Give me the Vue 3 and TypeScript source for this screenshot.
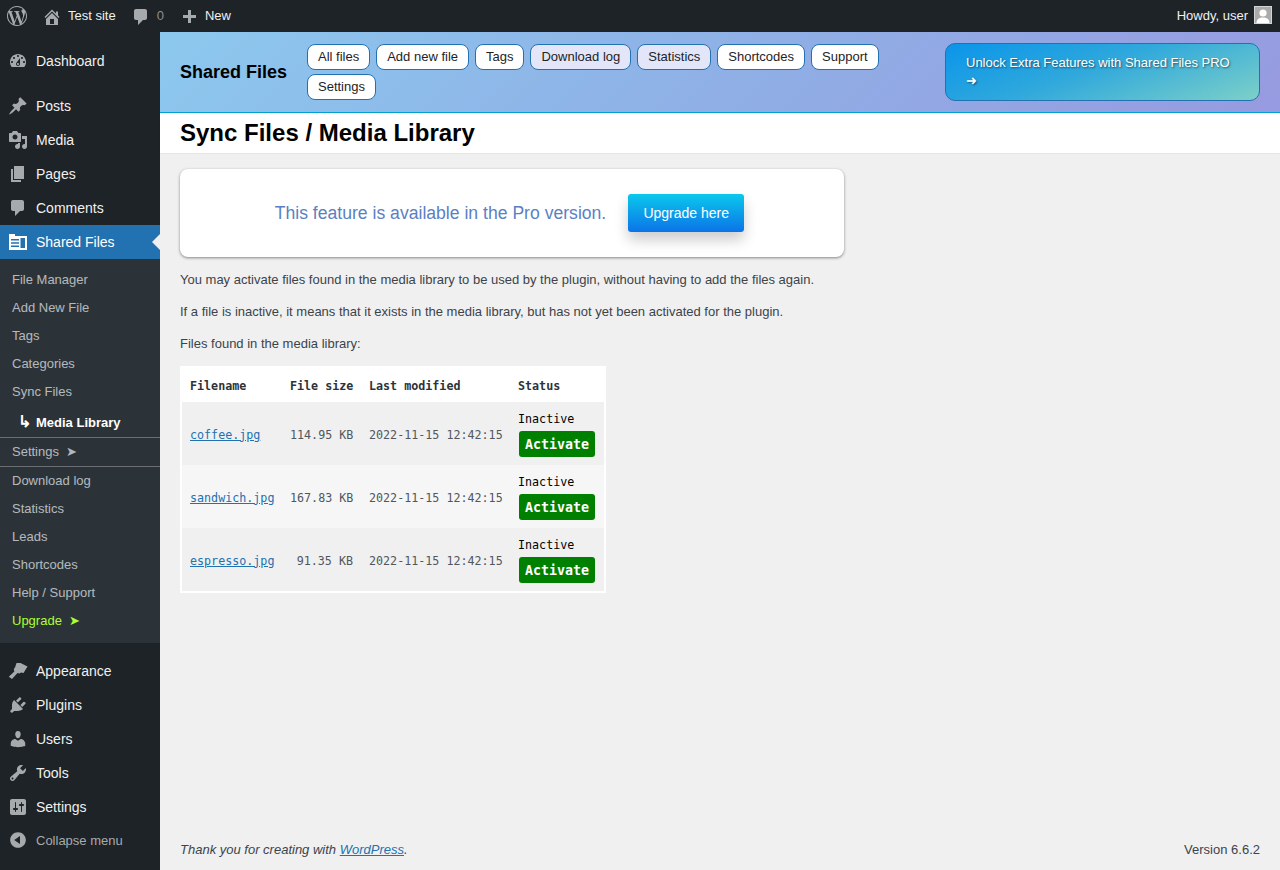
<script setup lang="ts">
interface MenuItem { label: string; d: string }
const icons: Record<string, string> = {
  dashboard: 'M3.76 16h12.48c1.1-1.37 1.76-3.11 1.76-5 0-4.42-3.58-8-8-8s-8 3.58-8 8c0 1.89.66 3.63 1.76 5zM10 4c.55 0 1 .45 1 1s-.45 1-1 1-1-.45-1-1 .45-1 1-1zM6 6c.55 0 1 .45 1 1s-.45 1-1 1-1-.45-1-1 .45-1 1-1zm8 0c.55 0 1 .45 1 1s-.45 1-1 1-1-.45-1-1 .45-1 1-1zm-5.37 5.55L12 7v6c0 1.1-.9 2-2 2s-2-.9-2-2c0-.57.24-1.08.63-1.45zM4 10c.55 0 1 .45 1 1s-.45 1-1 1-1-.45-1-1 .45-1 1-1zm12 0c.55 0 1 .45 1 1s-.45 1-1 1-1-.45-1-1 .45-1 1-1zm-5 3c0-.55-.45-1-1-1s-1 .45-1 1 .45 1 1 1 1-.45 1-1z',
  post: 'M10.44 3.02l1.82-1.82 6.36 6.35-1.83 1.82c-1.05-.68-2.48-.57-3.41.36l-.75.75c-.92.93-1.04 2.35-.35 3.41l-1.83 1.82-2.41-2.41-2.8 2.79c-.42.42-3.38 2.71-3.8 2.29s1.86-3.39 2.28-3.81l2.79-2.79L4.1 9.36l1.83-1.82c1.05.69 2.48.57 3.4-.36l.75-.75c.93-.92 1.05-2.35.36-3.41z',
  media: 'M13 11V4c0-.55-.45-1-1-1h-1.67L9 1H5L3.67 3H2c-.55 0-1 .45-1 1v7c0 .55.45 1 1 1h10c.55 0 1-.45 1-1zM7 4.5c1.38 0 2.5 1.12 2.5 2.5S8.38 9.5 7 9.5 4.5 8.38 4.5 7 5.62 4.5 7 4.5zM14 6h5v10.5c0 1.38-1.12 2.5-2.5 2.5S14 17.88 14 16.5s1.12-2.5 2.5-2.5c.17 0 .34.02.5.05V9h-3V6zm-4 8.05V13h2v3.5c0 1.38-1.12 2.5-2.5 2.5S7 17.88 7 16.5 8.12 14 9.5 14c.17 0 .34.02.5.05z',
  page: 'M6 15V2h10v13H6zm-1 1h8v2H3V5h2v11z',
  comment: 'M5 2h9c1.1 0 2 .9 2 2v7c0 1.1-.9 2-2 2h-2l-5 5v-5H5c-1.1 0-2-.9-2-2V4c0-1.1.9-2 2-2z',
  appearance: 'M8.500 2L12.500 2L19.500 5.500L15.500 12L13 11.500L11.500 12.500L9.500 12L4 18L.8 15.800L6.300 10.500L5.800 8L7 6.500z',
  plugin: 'M13.11 4.36L9.87 7.6 8 5.73l3.24-3.24c.35-.34 1.05-.2 1.56.32.52.51.66 1.21.31 1.55zm-8 1.77l.91-1.12 9.01 9.01-1.19.84c-.71.71-2.63 1.16-3.82 1.16H6.14L4.9 17.26c-.59.59-1.54.59-2.12 0-.59-.58-.59-1.53 0-2.12l1.24-1.24v-3.88c0-1.13.4-3.19 1.09-3.89zm7.26 3.97l3.24-3.24c.34-.35 1.04-.21 1.55.31.52.51.66 1.21.31 1.55l-3.24 3.25z',
  users: 'M10 9.25c-2.27 0-2.73-3.44-2.73-3.44C7 4.02 7.82 2 9.97 2c2.16 0 2.98 2.02 2.71 3.81 0 0-.41 3.44-2.68 3.44zm0 2.57L12.72 10c2.39 0 4.52 2.33 4.52 4.53v2.49s-3.65 1.13-7.24 1.13c-3.65 0-7.24-1.13-7.24-1.13v-2.49c0-2.25 1.94-4.48 4.47-4.48z',
  tools: 'M16.68 9.77c-1.34 1.34-3.3 1.67-4.95.99l-5.41 6.52c-.99.99-2.59.99-3.58 0s-.99-2.59 0-3.57l6.52-5.42c-.68-1.65-.35-3.61.99-4.95 1.28-1.28 3.12-1.62 4.72-1.06l-2.89 2.89 2.82 2.82 2.86-2.87c.53 1.58.18 3.39-1.08 4.65zM3.81 16.21c.4.39 1.04.39 1.43 0 .4-.4.4-1.04 0-1.43-.39-.4-1.03-.4-1.43 0-.39.39-.39 1.03 0 1.43z',
  settings: 'M18 16V4c0-1.1-.9-2-2-2H4c-1.1 0-2 .9-2 2v12c0 1.1.9 2 2 2h12c1.1 0 2-.9 2-2zM8 11h1c.55 0 1 .45 1 1s-.45 1-1 1H8v1.5c0 .28-.22.5-.5.5s-.5-.22-.5-.5V13H6c-.55 0-1-.45-1-1s.45-1 1-1h1V5.500c0-.28.22-.5.5-.5s.5.22.5.5V11zm5-2h-1c-.55 0-1-.45-1-1s.45-1 1-1h1V5.500c0-.28.22-.5.5-.5s.5.22.5.5V7h1c.55 0 1 .45 1 1s-.45 1-1 1h-1v5.500c0 .28-.22.5-.5.5s-.5-.22-.5-.5V9z',
  home: 'M16 8.500l1.530 1.530-1.060 1.060L10 4.620l-6.470 6.470-1.060-1.060L10 2.500l4 4v-2h2v4zm-6-2.460l6 5.990V18H4v-5.970zM12 17v-5H8v5h4z',
  plus: 'M17 7v3h-5v5H9v-5H4V7h5V2h3v5h5z',
  collapse: 'M10 2.160c4.330 0 7.840 3.510 7.840 7.840s-3.510 7.840-7.840 7.840S2.160 14.330 2.160 10 5.710 2.160 10 2.160zm2 11.720V6.120L6.180 9.970z'
}
const wpLogo = 'M21.469 6.825c.84 1.537 1.318 3.3 1.318 5.175 0 3.979-2.156 7.456-5.363 9.325l3.295-9.527c.615-1.54.82-2.771.82-3.864 0-.405-.026-.78-.07-1.11m-7.981.105c.647-.03 1.232-.105 1.232-.105.582-.075.514-.93-.067-.899 0 0-1.755.135-2.88.135-1.064 0-2.85-.15-2.85-.15-.585-.03-.661.855-.075.885 0 0 .54.061 1.125.09l1.68 4.605-2.37 7.08L5.354 6.9c.649-.03 1.234-.1 1.234-.1.585-.075.516-.93-.065-.896 0 0-1.746.138-2.874.138-.2 0-.438-.008-.69-.015C4.911 3.15 8.235 1.215 12 1.215c2.809 0 5.365 1.072 7.286 2.833-.046-.003-.091-.009-.141-.009-1.06 0-1.812.923-1.812 1.914 0 .89.513 1.643 1.06 2.531.411.72.89 1.643.89 2.977 0 .915-.354 1.994-.821 3.479l-1.075 3.585-3.9-11.61.001.014zM12 22.784c-1.059 0-2.081-.153-3.048-.437l3.237-9.406 3.315 9.087c.024.053.05.101.078.149-1.12.393-2.325.609-3.582.609M1.211 12c0-1.564.336-3.05.935-4.39L7.29 21.709C3.694 19.96 1.212 16.271 1.211 12M12 0C5.385 0 0 5.385 0 12s5.385 12 12 12 12-5.385 12-12S18.615 0 12 0'

const menuTop: MenuItem[] = [
  { label: 'Posts', d: icons.post },
  { label: 'Media', d: icons.media },
  { label: 'Pages', d: icons.page },
  { label: 'Comments', d: icons.comment }
]
const menuBottom: MenuItem[] = [
  { label: 'Appearance', d: icons.appearance },
  { label: 'Plugins', d: icons.plugin },
  { label: 'Users', d: icons.users },
  { label: 'Tools', d: icons.tools },
  { label: 'Settings', d: icons.settings }
]
const subA = ['File Manager', 'Add New File', 'Tags', 'Categories', 'Sync Files']
const subB = ['Download log', 'Statistics', 'Leads', 'Shortcodes', 'Help / Support']
const tabs = [
  { label: 'All files', tint: false },
  { label: 'Add new file', tint: false },
  { label: 'Tags', tint: false },
  { label: 'Download log', tint: true },
  { label: 'Statistics', tint: true },
  { label: 'Shortcodes', tint: false },
  { label: 'Support', tint: false },
  { label: 'Settings', tint: false }
]
const files = [
  { name: 'coffee.jpg', size: '114.95 KB' },
  { name: 'sandwich.jpg', size: '167.83 KB' },
  { name: 'espresso.jpg', size: '91.35 KB' }
]
</script>

<template>
  <div class="page">
    <header class="adminbar">
      <svg class="wp" viewBox="0 0 24 24"><path :d="wpLogo" /></svg>
      <svg class="bar-ico home" viewBox="0 0 20 20"><path :d="icons.home" /></svg>
      <span class="bar-text site">Test site</span>
      <svg class="bar-ico cmt" viewBox="0 0 20 20"><path :d="icons.comment" /></svg>
      <span class="bar-text zero">0</span>
      <svg class="bar-ico plus" viewBox="0 0 20 20"><path :d="icons.plus" /></svg>
      <span class="bar-text">New</span>
      <span class="bar-text howdy">Howdy, user</span>
      <svg class="avatar" viewBox="0 0 18 18">
        <rect width="18" height="18" fill="#d4d4d4" />
        <rect x="1" y="1" width="16" height="16" fill="#ababab" />
        <circle cx="9" cy="7" r="3.6" fill="#fff" />
        <path d="M2.500 17c0-4 3-5.500 6.500-5.500s6.500 1.500 6.500 5.500z" fill="#fff" />
      </svg>
    </header>

    <div class="body">
      <aside class="sidebar">
        <a class="item first"><svg class="ico" viewBox="0 0 20 20"><path :d="icons.dashboard" /></svg>Dashboard</a>
        <div class="sep"></div>
        <a v-for="m in menuTop" :key="m.label" class="item"><svg class="ico" viewBox="0 0 20 20"><path :d="m.d" /></svg>{{ m.label }}</a>
        <a class="item current">
          <svg class="ico sf" viewBox="0 0 20 20">
            <path fill-rule="evenodd" d="M1 2h6v2h12v14H1zM3 7v1.500h8V7zM3 10.250v1.500h8v-1.500zM3 13.500V15h8v-1.500zM12.500 6v10h4.500V6z" />
          </svg>Shared Files
        </a>
        <div class="sub">
          <a v-for="s in subA" :key="s" class="sub-item">{{ s }}</a>
          <a class="sub-item active"><span class="hook">↳</span>Media Library</a>
          <a class="sub-item ruled">Settings<span class="tri">➤</span></a>
          <a v-for="s in subB" :key="s" class="sub-item">{{ s }}</a>
          <a class="sub-item upgrade">Upgrade<span class="tri">➤</span></a>
        </div>
        <div class="sep second"></div>
        <a v-for="m in menuBottom" :key="m.label" class="item"><svg class="ico" viewBox="0 0 20 20"><path :d="m.d" /></svg>{{ m.label }}</a>
        <a class="collapse"><svg class="ico" viewBox="0 0 20 20"><path :d="icons.collapse" /></svg>Collapse menu</a>
      </aside>

      <main class="main">
        <section class="plugin-head">
          <div class="brand">Shared Files</div>
          <nav class="tabs">
            <a v-for="t in tabs" :key="t.label" class="tab" :class="{ tint: t.tint }">{{ t.label }}</a>
          </nav>
          <a class="promo">Unlock Extra Features with Shared Files PRO <span class="arrow">➜</span></a>
        </section>
        <section class="title-bar"><h1>Sync Files / Media Library</h1></section>

        <section class="content">
          <div class="card">
            <span class="card-text">This feature is available in the Pro version.</span>
            <a class="upgrade-btn">Upgrade here</a>
          </div>
          <p>You may activate files found in the media library to be used by the plugin, without having to add the files again.</p>
          <p>If a file is inactive, it means that it exists in the media library, but has not yet been activated for the plugin.</p>
          <p>Files found in the media library:</p>
          <table class="files">
            <colgroup>
              <col class="c1" /><col class="c2" /><col class="c3" /><col class="c4" />
            </colgroup>
            <thead>
              <tr><th>Filename</th><th>File size</th><th>Last modified</th><th>Status</th></tr>
            </thead>
            <tbody>
              <tr v-for="f in files" :key="f.name">
                <td><a class="file-link">{{ f.name }}</a></td>
                <td class="num">{{ f.size }}</td>
                <td>2022-11-15 12:42:15</td>
                <td class="status"><div class="inactive">Inactive</div><a class="activate">Activate</a></td>
              </tr>
            </tbody>
          </table>
        </section>

        <footer class="foot">
          <span class="thanks">Thank you for creating with <a>WordPress</a>.</span>
          <span>Version 6.6.2</span>
        </footer>
      </main>
    </div>
  </div>
</template>

<style>
html, body { margin: 0; padding: 0; background: #f0f0f0; overflow: hidden; }
</style>

<style scoped>
.page { width: 1280px; height: 870px; display: flex; flex-direction: column; font-family: "Liberation Sans", Arial, sans-serif; font-size: 13px; color: #3c434a; overflow: hidden; }
.adminbar { height: 32px; flex: none; background: #1d2327; display: flex; align-items: center; color: #f0f0f1; padding-right: 8px; }
.wp { width: 20px; height: 20px; margin-left: 7px; fill: #a7aaad; }
.bar-ico { width: 20px; height: 20px; fill: #a7aaad; flex: none; }
.home { margin-left: 15px; margin-right: 6px; margin-top: 1px; }
.site { margin-right: 15px; }
.cmt { margin-right: 6px; margin-top: 2px; }
.zero { color: #8c8f94; margin-right: 15px; }
.plus { margin-right: 6px; margin-top: 4px; }
.bar-text { line-height: 32px; }
.howdy { margin-left: auto; margin-right: 6px; }
.avatar { width: 18px; height: 18px; flex: none; margin-top: -2px; }
.body { flex: 1; display: flex; min-height: 0; }
.sidebar { width: 160px; flex: none; background: #1d2327; padding-top: 12px; color: #f0f0f1; font-size: 14px; }
.item { display: flex; align-items: center; height: 34px; position: relative; }
.ico { width: 20px; height: 20px; fill: #a7aaad; margin: 0 8px 0 8px; flex: none; }
.sep { height: 11px; }
.current { background: #2271b1; color: #fff; }
.current .ico { fill: #fff; }
.current::after { content: ""; position: absolute; right: 0; top: 50%; margin-top: -8px; border: 8px solid transparent; border-right-color: #f0f0f1; border-left-width: 0; }
.sub { background: #2c3338; padding: 7px 0 8px; font-size: 13px; color: rgba(240, 246, 252, 0.7); }
.sub-item { display: block; height: 28px; line-height: 27px; padding-left: 12px; }
.sub-item.active { color: #fff; font-weight: 700; line-height: 34px; padding-left: 18px; border-bottom: 1px solid #6b6f73; box-sizing: border-box; height: 32px; }
.hook { display: inline-block; width: 18px; font-size: 16px; line-height: 1; }
.sub-item.ruled { border-bottom: 1px solid #6b6f73; height: 29px; box-sizing: border-box; line-height: 27px; }
.tri { margin-left: 7px; font-size: 13px; }
.sub-item.upgrade { color: #adff2f; }
.collapse { display: flex; align-items: center; height: 34px; color: #a7aaad; font-size: 13px; margin-top: -1px; }
.main { flex: 1; min-width: 0; display: flex; flex-direction: column; }
.plugin-head { height: 80px; box-sizing: content-box; display: flex; align-items: center; padding: 0 20px; background: linear-gradient(135deg, #8cc8ee 0%, #8fb0e6 50%, #979ae0 100%); border-bottom: 1px solid #00a0d2; }
.brand { font-size: 18px; font-weight: 700; color: #000; width: 127px; flex: none; margin-top: 1px; }
.tabs { width: 600px; flex: none; display: flex; flex-wrap: wrap; gap: 4px 6px; align-self: flex-start; margin-top: 12px; }
.tab { height: 24px; line-height: 24px; padding: 0 10px; background: #fff; border: 1px solid #2271b1; border-radius: 8px; color: #1d2327; }
.tab.tint { background: #e2e6f8; }
.promo { margin-left: auto; width: 315px; height: 58px; box-sizing: border-box; padding: 10px 20px; line-height: 18px; border: 1px solid #2271b1; border-radius: 10px; color: #fff; text-shadow: 1px 1px 2px rgba(0, 0, 0, 0.55); background: linear-gradient(160deg, #0a95ea 0%, #2fa8dc 45%, #7dd0c8 100%); }
.arrow { font-size: 13px; }
.title-bar { height: 40px; background: #fff; flex: none; display: flex; align-items: center; padding: 0 20px; box-shadow: 0 1px 1px rgba(0,0,0,.04); }
h1 { margin: 0; font-size: 24px; font-weight: 700; color: #000; line-height: 40px; }
.content { padding: 16px 20px 0; flex: 1; }
.card { width: 664px; height: 88px; box-sizing: border-box; padding-right: 5px; background: #fff; border-radius: 8px; box-shadow: 0 1px 3px rgba(0, 0, 0, 0.45); display: flex; align-items: center; justify-content: center; gap: 22px; }
.card-text { font-size: 17.6px; color: #5b7fc4; }
.upgrade-btn { width: 116px; height: 38px; line-height: 38px; text-align: center; font-size: 14px; color: #fff; border-radius: 3px; background: linear-gradient(180deg, #0bc8ec 0%, #0b74e8 100%); box-shadow: 0 8px 14px rgba(0, 0, 0, 0.2); }
p { margin: 0; line-height: 19px; height: 19px; }
.card + p { margin-top: 13px; }
p + p { margin-top: 13px; }
.files { margin-top: 13px; width: 426px; table-layout: fixed; border: 2px solid #fff; border-collapse: separate; border-spacing: 0; background: #fff; font-family: "DejaVu Sans Mono", "Liberation Mono", monospace; font-size: 11.7px; color: #50575e; }
.c1 { width: 100px; }
.c2 { width: 79px; }
.c3 { width: 149px; }
.c4 { width: 94px; }
.files th { height: 34px; padding: 2px 8px 0; text-align: left; font-weight: 700; color: #2c3338; box-sizing: border-box; white-space: nowrap; }
.files td { height: 63px; padding: 2px 8px 0; box-sizing: border-box; background: #f0f0f0; white-space: nowrap; }
.files td.status { padding-top: 0; }
.files tbody tr:nth-child(even) td { background: #f6f6f6; }
.num { text-align: right; }
.file-link { color: #2271b1; text-decoration: underline; }
.inactive { color: #000; line-height: 18px; }
.activate { display: block; width: 76px; height: 26px; line-height: 28px; margin: 3px 1px 0; text-align: center; border-radius: 3px; background: #008000; color: #fff; font-weight: 700; font-size: 13.3px; }
.foot { display: flex; justify-content: space-between; align-items: center; padding: 0 20px; height: 42px; flex: none; }
.thanks { font-style: italic; }
.thanks a { color: #2271b1; text-decoration: underline; }
</style>
